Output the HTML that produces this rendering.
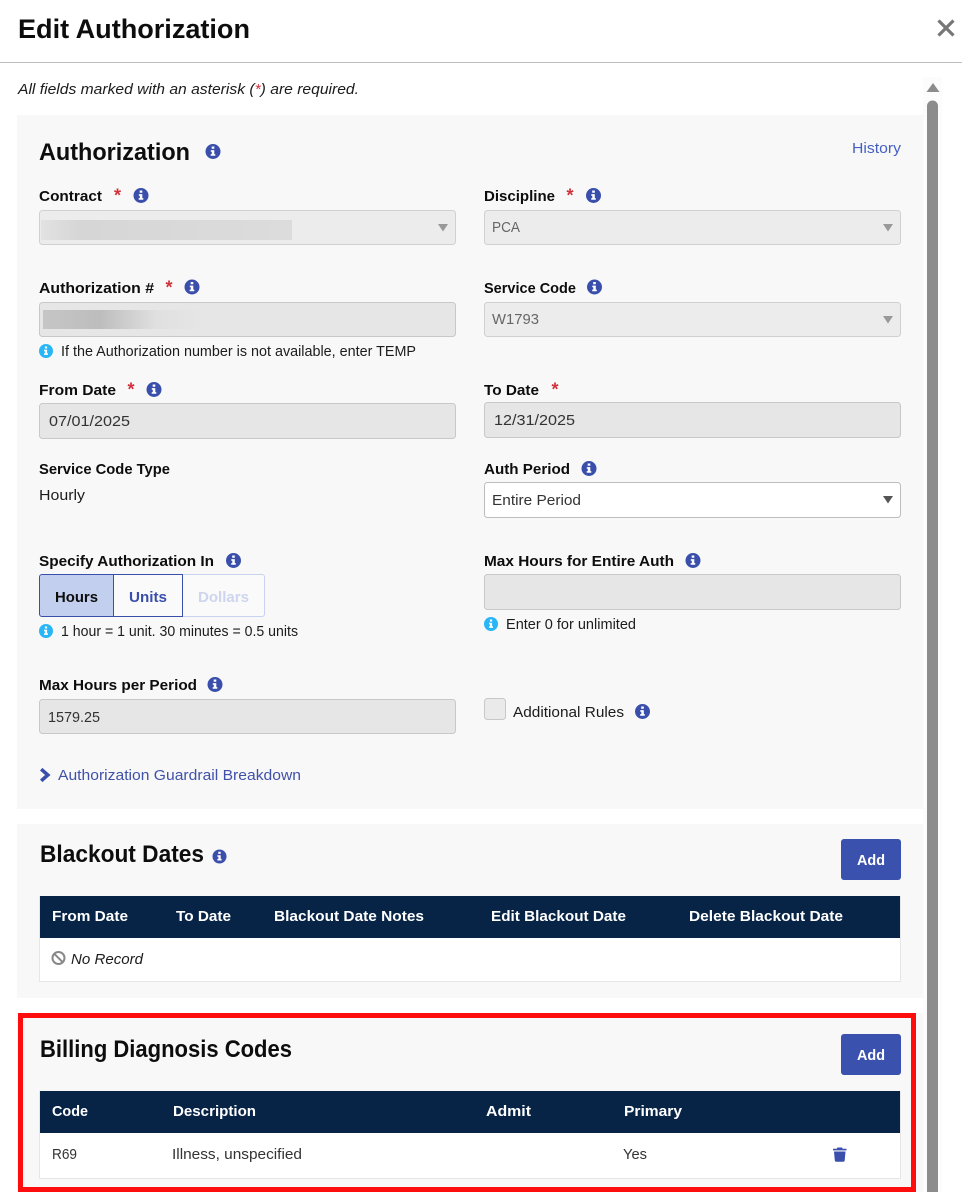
<!DOCTYPE html>
<html lang="en">
<head>
<meta charset="utf-8">
<title>Edit Authorization</title>
<style>
html,body{margin:0;padding:0;background:#fff;width:962px;height:1192px;overflow:hidden}
svg{display:block}
text{font-family:"Liberation Sans",sans-serif;font-size:15px;fill:#1c1c1c;white-space:pre}
.b{font-weight:700;fill:#0d0d0d}
.h{font-weight:700;font-size:24px;fill:#0d0d0d}
.w{font-weight:700;fill:#fff}
.g{fill:#666}
.l{fill:#3f51a8}
.i{font-style:italic}
.s{font-size:14.5px}
.r{font-weight:700;font-size:18px;fill:#d0323c}
</style>
</head>
<body>
<svg width="962" height="1192" viewBox="0 0 962 1192" xmlns="http://www.w3.org/2000/svg">
<defs>
<linearGradient id="bl1" x1="0" x2="1" y1="0" y2="0"><stop offset="0" stop-color="#e2e2e2"/><stop offset=".15" stop-color="#d6d6d6"/><stop offset="1" stop-color="#dcdcdc"/></linearGradient>
<linearGradient id="bl2" x1="0" x2="1" y1="0" y2="0"><stop offset="0" stop-color="#c6c6c6"/><stop offset=".35" stop-color="#bdbdbd"/><stop offset=".7" stop-color="#e0e0e0"/><stop offset="1" stop-color="#e6e6e6"/></linearGradient>
</defs>
<rect width="962" height="1192" fill="#fff"/>

<!-- header -->
<text x="18" y="38" class="b" style="font-size:27px" textLength="232" lengthAdjust="spacingAndGlyphs">Edit Authorization</text>
<path d="M938.500 20.500L953.500 35.500M953.500 20.500L938.500 35.500" stroke="#777" stroke-width="3.200" fill="none"/>
<rect x="0" y="62" width="962" height="1" fill="#bcbcbc"/>

<!-- scrollbar -->
<rect x="923" y="77" width="19" height="1115" fill="#fcfcfc"/>
<path d="M933 83L939.500 92H926.500Z" fill="#8c8c8c"/>
<path d="M927 1192V106a5.500 5.500 0 0 1 11 0V1192Z" fill="#8c8c8c"/>

<text x="18" y="94" class="i" textLength="341" lengthAdjust="spacingAndGlyphs">All fields marked with an asterisk (<tspan fill="#d0323c">*</tspan>) are required.</text>

<!-- Authorization panel -->
<rect x="17" y="115" width="906" height="694" fill="#f8f8f8"/>
<text x="39" y="160" class="h" textLength="151" lengthAdjust="spacingAndGlyphs">Authorization</text>
<g transform="translate(213 151.500)"><circle r="7.500" fill="#3a4fab"/><path d="M-1.300-5h2.600v2.300h-2.600ZM-2.200-1.400H1.300V2.600H2.300V4.300H-2.300V2.600H-1.200V.3H-2.200Z" fill="#fff"/></g>
<text x="852" y="153" class="l" style="fill:#4560c4" textLength="49" lengthAdjust="spacingAndGlyphs">History</text>

<!-- Contract -->
<text x="39" y="201" class="b" textLength="63" lengthAdjust="spacingAndGlyphs">Contract</text>
<text x="114" y="201.500" class="r">*</text>
<g transform="translate(141 195.500)"><circle r="7.500" fill="#3a4fab"/><path d="M-1.300-5h2.600v2.300h-2.600ZM-2.200-1.400H1.300V2.600H2.300V4.300H-2.300V2.600H-1.200V.3H-2.200Z" fill="#fff"/></g>
<rect x="39.500" y="210.500" width="416" height="34" rx="3" fill="#ececec" stroke="#d0d0d0"/>
<rect x="41" y="220" width="251" height="20" fill="url(#bl1)"/>
<path d="M438 224H448L443 231.500Z" fill="#999"/>

<!-- Discipline -->
<text x="484" y="201" class="b" textLength="71" lengthAdjust="spacingAndGlyphs">Discipline</text>
<text x="566.500" y="201.500" class="r">*</text>
<g transform="translate(593.500 195.500)"><circle r="7.500" fill="#3a4fab"/><path d="M-1.300-5h2.600v2.300h-2.600ZM-2.200-1.400H1.300V2.600H2.300V4.300H-2.300V2.600H-1.200V.3H-2.200Z" fill="#fff"/></g>
<rect x="484.500" y="210.500" width="416" height="34" rx="3" fill="#ececec" stroke="#d0d0d0"/>
<text x="492" y="232" class="g" textLength="28" lengthAdjust="spacingAndGlyphs">PCA</text>
<path d="M883 224H893L888 231.500Z" fill="#999"/>

<!-- Authorization # -->
<text x="39" y="293" class="b" textLength="115" lengthAdjust="spacingAndGlyphs">Authorization #</text>
<text x="165.500" y="293.500" class="r">*</text>
<g transform="translate(192 287)"><circle r="7.500" fill="#3a4fab"/><path d="M-1.300-5h2.600v2.300h-2.600ZM-2.200-1.400H1.300V2.600H2.300V4.300H-2.300V2.600H-1.200V.3H-2.200Z" fill="#fff"/></g>
<rect x="39.500" y="302.500" width="416" height="34" rx="3" fill="#e6e6e6" stroke="#c8c8c8"/>
<rect x="43" y="310" width="162" height="19" fill="url(#bl2)"/>
<g transform="translate(46 351)"><circle r="7" fill="#29b6f6"/><path d="M-1.100-4.500h2.200v2h-2.200ZM-2-1.200H1.100V2.400H2V3.900H-2V2.400H-1.100V.2H-2Z" fill="#fff"/></g>
<text x="61" y="356" class="s" textLength="355" lengthAdjust="spacingAndGlyphs">If the Authorization number is not available, enter TEMP</text>

<!-- Service Code -->
<text x="484" y="293" class="b" textLength="92" lengthAdjust="spacingAndGlyphs">Service Code</text>
<g transform="translate(594.500 287)"><circle r="7.500" fill="#3a4fab"/><path d="M-1.300-5h2.600v2.300h-2.600ZM-2.200-1.400H1.300V2.600H2.300V4.300H-2.300V2.600H-1.200V.3H-2.200Z" fill="#fff"/></g>
<rect x="484.500" y="302.500" width="416" height="34" rx="3" fill="#ececec" stroke="#d0d0d0"/>
<text x="492" y="324" class="g" textLength="47" lengthAdjust="spacingAndGlyphs">W1793</text>
<path d="M883 316H893L888 323.500Z" fill="#999"/>

<!-- From Date -->
<text x="39" y="395" class="b" textLength="77" lengthAdjust="spacingAndGlyphs">From Date</text>
<text x="127.500" y="395.500" class="r">*</text>
<g transform="translate(154 389.500)"><circle r="7.500" fill="#3a4fab"/><path d="M-1.300-5h2.600v2.300h-2.600ZM-2.200-1.400H1.300V2.600H2.300V4.300H-2.300V2.600H-1.200V.3H-2.200Z" fill="#fff"/></g>
<rect x="39.500" y="403.500" width="416" height="35" rx="3" fill="#e6e6e6" stroke="#c8c8c8"/>
<text x="49" y="426" style="fill:#333" textLength="81" lengthAdjust="spacingAndGlyphs">07/01/2025</text>

<!-- To Date -->
<text x="484" y="395" class="b" textLength="55" lengthAdjust="spacingAndGlyphs">To Date</text>
<text x="551.500" y="395.500" class="r">*</text>
<rect x="484.500" y="402.500" width="416" height="35" rx="3" fill="#e6e6e6" stroke="#c8c8c8"/>
<text x="494" y="425" style="fill:#333" textLength="81" lengthAdjust="spacingAndGlyphs">12/31/2025</text>

<!-- Service Code Type -->
<text x="39" y="474" class="b" textLength="131" lengthAdjust="spacingAndGlyphs">Service Code Type</text>
<text x="39" y="500" textLength="46" lengthAdjust="spacingAndGlyphs">Hourly</text>

<!-- Auth Period -->
<text x="484" y="474" class="b" textLength="86" lengthAdjust="spacingAndGlyphs">Auth Period</text>
<g transform="translate(589 468.500)"><circle r="7.500" fill="#3a4fab"/><path d="M-1.300-5h2.600v2.300h-2.600ZM-2.200-1.400H1.300V2.600H2.300V4.300H-2.300V2.600H-1.200V.3H-2.200Z" fill="#fff"/></g>
<rect x="484.500" y="482.500" width="416" height="35" rx="3" fill="#fff" stroke="#bdbdbd"/>
<text x="492" y="505" style="fill:#333" textLength="89" lengthAdjust="spacingAndGlyphs">Entire Period</text>
<path d="M883 496H893L888 503.500Z" fill="#555"/>

<!-- Specify Authorization In -->
<text x="39" y="566" class="b" textLength="175" lengthAdjust="spacingAndGlyphs">Specify Authorization In</text>
<g transform="translate(233.500 560.500)"><circle r="7.500" fill="#3a4fab"/><path d="M-1.300-5h2.600v2.300h-2.600ZM-2.200-1.400H1.300V2.600H2.300V4.300H-2.300V2.600H-1.200V.3H-2.200Z" fill="#fff"/></g>
<path d="M182.500 574.500H262a2.500 2.500 0 0 1 2.500 2.500V614a2.500 2.500 0 0 1-2.500 2.500H182.500Z" fill="#fafafa" stroke="#c9d2f0"/>
<rect x="113.500" y="574.500" width="69" height="42" fill="#fafafa" stroke="#3a4fab"/>
<path d="M113.500 574.500H42a2.500 2.500 0 0 0-2.500 2.500V614a2.500 2.500 0 0 0 2.500 2.500H113.500Z" fill="#c3cfef" stroke="#3a4fab"/>
<text x="55" y="602" class="b" textLength="43" lengthAdjust="spacingAndGlyphs">Hours</text>
<text x="129" y="602" class="b" style="fill:#3a4fab" textLength="38" lengthAdjust="spacingAndGlyphs">Units</text>
<text x="198" y="602" class="b" style="fill:#ced5ee" textLength="51" lengthAdjust="spacingAndGlyphs">Dollars</text>
<g transform="translate(46 631)"><circle r="7" fill="#29b6f6"/><path d="M-1.100-4.500h2.200v2h-2.200ZM-2-1.200H1.100V2.400H2V3.900H-2V2.400H-1.100V.2H-2Z" fill="#fff"/></g>
<text x="61" y="636" class="s" textLength="237" lengthAdjust="spacingAndGlyphs">1 hour = 1 unit. 30 minutes = 0.5 units</text>

<!-- Max Hours for Entire Auth -->
<text x="484" y="566" class="b" textLength="190" lengthAdjust="spacingAndGlyphs">Max Hours for Entire Auth</text>
<g transform="translate(693 560.500)"><circle r="7.500" fill="#3a4fab"/><path d="M-1.300-5h2.600v2.300h-2.600ZM-2.200-1.400H1.300V2.600H2.300V4.300H-2.300V2.600H-1.200V.3H-2.200Z" fill="#fff"/></g>
<rect x="484.500" y="574.500" width="416" height="35" rx="3" fill="#e6e6e6" stroke="#c8c8c8"/>
<g transform="translate(491 624)"><circle r="7" fill="#29b6f6"/><path d="M-1.100-4.500h2.200v2h-2.200ZM-2-1.200H1.100V2.400H2V3.900H-2V2.400H-1.100V.2H-2Z" fill="#fff"/></g>
<text x="506" y="629" class="s" textLength="130" lengthAdjust="spacingAndGlyphs">Enter 0 for unlimited</text>

<!-- Max Hours per Period -->
<text x="39" y="690" class="b" textLength="158" lengthAdjust="spacingAndGlyphs">Max Hours per Period</text>
<g transform="translate(215 684.500)"><circle r="7.500" fill="#3a4fab"/><path d="M-1.300-5h2.600v2.300h-2.600ZM-2.200-1.400H1.300V2.600H2.300V4.300H-2.300V2.600H-1.200V.3H-2.200Z" fill="#fff"/></g>
<rect x="39.500" y="699.500" width="416" height="34" rx="3" fill="#e6e6e6" stroke="#c8c8c8"/>
<text x="48" y="722" style="fill:#333" textLength="52" lengthAdjust="spacingAndGlyphs">1579.25</text>

<!-- Additional Rules -->
<rect x="484.500" y="698.500" width="21" height="21" rx="3" fill="#eaeaea" stroke="#c8c8c8"/>
<text x="513" y="717" textLength="111" lengthAdjust="spacingAndGlyphs">Additional Rules</text>
<g transform="translate(642.500 711.500)"><circle r="7.500" fill="#3a4fab"/><path d="M-1.300-5h2.600v2.300h-2.600ZM-2.200-1.400H1.300V2.600H2.300V4.300H-2.300V2.600H-1.200V.3H-2.200Z" fill="#fff"/></g>

<!-- Guardrail -->
<path d="M41.200 769.200L47.800 775L41.200 780.800" fill="none" stroke="#3a4fab" stroke-width="3.600"/>
<text x="58" y="780" class="l" textLength="243" lengthAdjust="spacingAndGlyphs">Authorization Guardrail Breakdown</text>

<!-- Blackout Dates -->
<rect x="17" y="824" width="906" height="174" fill="#f8f8f8"/>
<text x="40" y="862" class="h" textLength="164" lengthAdjust="spacingAndGlyphs">Blackout Dates</text>
<g transform="translate(219.500 856.500)"><circle r="7" fill="#3a4fab"/><path d="M-1.200-4.700h2.400v2.100h-2.400ZM-2.100-1.300H1.200V2.400H2.100V4H-2.100V2.400H-1.100V.3H-2.100Z" fill="#fff"/></g>
<rect x="841" y="839" width="60" height="41" rx="3" fill="#3a51ad"/>
<text x="857" y="865" class="w" textLength="28" lengthAdjust="spacingAndGlyphs">Add</text>
<rect x="39.500" y="896.500" width="861" height="85" fill="#fff" stroke="#e6e6e6"/>
<rect x="40" y="896" width="860" height="42" fill="#072447"/>
<text x="52" y="921" class="w" textLength="76" lengthAdjust="spacingAndGlyphs">From Date</text>
<text x="176" y="921" class="w" textLength="55" lengthAdjust="spacingAndGlyphs">To Date</text>
<text x="274" y="921" class="w" textLength="150" lengthAdjust="spacingAndGlyphs">Blackout Date Notes</text>
<text x="491" y="921" class="w" textLength="135" lengthAdjust="spacingAndGlyphs">Edit Blackout Date</text>
<text x="689" y="921" class="w" textLength="154" lengthAdjust="spacingAndGlyphs">Delete Blackout Date</text>
<g transform="translate(58.500 958)" fill="none" stroke="#888" stroke-width="2"><circle r="6"/><path d="M-4.200-4.200L4.200 4.200"/></g>
<text x="71" y="964" class="i" textLength="72" lengthAdjust="spacingAndGlyphs">No Record</text>

<!-- Billing Diagnosis Codes -->
<rect x="17" y="1013" width="906" height="179" fill="#f8f8f8"/>
<text x="40" y="1057" class="h" textLength="252" lengthAdjust="spacingAndGlyphs">Billing Diagnosis Codes</text>
<rect x="841" y="1034" width="60" height="41" rx="3" fill="#3a51ad"/>
<text x="857" y="1060" class="w" textLength="28" lengthAdjust="spacingAndGlyphs">Add</text>
<rect x="39.500" y="1091.500" width="861" height="87" fill="#fff" stroke="#e6e6e6"/>
<rect x="40" y="1091" width="860" height="42" fill="#072447"/>
<text x="52" y="1116" class="w" textLength="36" lengthAdjust="spacingAndGlyphs">Code</text>
<text x="173" y="1116" class="w" textLength="83" lengthAdjust="spacingAndGlyphs">Description</text>
<text x="486" y="1116" class="w" textLength="45" lengthAdjust="spacingAndGlyphs">Admit</text>
<text x="624" y="1116" class="w" textLength="58" lengthAdjust="spacingAndGlyphs">Primary</text>
<text x="52" y="1159" style="fill:#333" textLength="25" lengthAdjust="spacingAndGlyphs">R69</text>
<text x="172" y="1159" style="fill:#333" textLength="130" lengthAdjust="spacingAndGlyphs">Illness, unspecified</text>
<text x="623" y="1159" style="fill:#333" textLength="24" lengthAdjust="spacingAndGlyphs">Yes</text>
<path d="M837.500 1147.500H842L842.700 1148.800H846.500V1150.400H833V1148.800H836.800ZM834 1151.500H845.500L844.700 1160.500A1.300 1.300 0 0 1 843.400 1161.700H836.100A1.300 1.300 0 0 1 834.800 1160.500Z" fill="#3a4fab"/>

<!-- red highlight -->
<path d="M18 1013H916V1192H18ZM23 1018V1187H911V1018Z" fill="#fd0d0d" fill-rule="evenodd"/>
</svg>
</body>
</html>
